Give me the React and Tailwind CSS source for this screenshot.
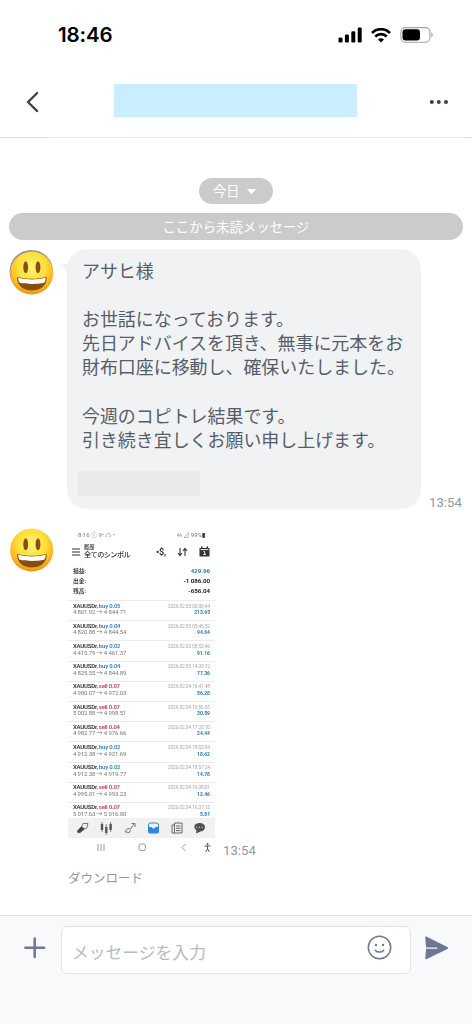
import { useState } from 'react';

const messageLines = [
  'アサヒ様',
  '',
  'お世話になっております。',
  '先日アドバイスを頂き、無事に元本をお',
  '財布口座に移動し、確保いたしました。',
  '',
  '今週のコピトレ結果です。',
  '引き続き宜しくお願い申し上げます。',
];

const trades = [
  { side: 'buy', lot: '0.05', from: '4 801.92', to: '4 844.71', time: '2026.02.05 06:06:44', profit: '213.95' },
  { side: 'buy', lot: '0.04', from: '4 820.88', to: '4 844.54', time: '2026.02.05 05:46:52', profit: '94.64' },
  { side: 'buy', lot: '0.02', from: '4 415.79', to: '4 461.37', time: '2026.02.02 08:52:46', profit: '91.16' },
  { side: 'buy', lot: '0.04', from: '4 825.55', to: '4 844.89', time: '2026.02.05 14:28:12', profit: '77.36' },
  { side: 'sell', lot: '0.07', from: '4 980.07', to: '4 972.03', time: '2026.02.04 16:41:48', profit: '56.28' },
  { side: 'sell', lot: '0.07', from: '5 002.88', to: '4 998.51', time: '2026.02.04 16:56:35', profit: '30.59' },
  { side: 'sell', lot: '0.04', from: '4 982.77', to: '4 976.66', time: '2026.02.04 17:20:10', profit: '24.44' },
  { side: 'buy', lot: '0.02', from: '4 912.38', to: '4 921.69', time: '2026.02.04 18:53:04', profit: '18.62' },
  { side: 'buy', lot: '0.02', from: '4 912.38', to: '4 919.77', time: '2026.02.04 18:57:24', profit: '14.78' },
  { side: 'sell', lot: '0.07', from: '4 995.01', to: '4 993.23', time: '2026.02.04 16:38:01', profit: '12.46' },
  { side: 'sell', lot: '0.07', from: '5 017.63', to: '5 016.80', time: '2026.02.04 16:37:15', profit: '5.81' },
];

const summary = [
  { label: '損益:', value: '429.96', color: 'text-[#2878c0]' },
  { label: '出金:', value: '-1 086.00', color: 'text-[#222]' },
  { label: '残高:', value: '-656.04', color: 'text-[#222]' },
];

function StatusBar() {
  return (
    <div className="flex h-[70px] items-center justify-between pl-[58px] pr-[38px]">
      <span className="font-['Inter'] text-[20.5px] font-semibold leading-6 tracking-[-0.1px] text-black">18:46</span>
      <div className="flex items-center gap-[9px]">
        <svg width="24" height="16" viewBox="0 0 24 16">
          <rect x="0.5" y="10.5" width="4" height="5" rx="1.2" />
          <rect x="6.9" y="7.6" width="4" height="7.9" rx="1.2" />
          <rect x="13.3" y="4.2" width="4" height="11.3" rx="1.2" />
          <rect x="19.7" y="0.6" width="4" height="14.9" rx="1.2" />
        </svg>
        <svg width="20" height="15" viewBox="0 0 20 15" fill="none" stroke="#000">
          <path d="M1 5C6-.1 14-.1 19 5" strokeWidth="2.7" />
          <path d="M4.2 8.5c3.3-3.2 8.3-3.2 11.6 0" strokeWidth="2.6" />
          <path d="M7 11.4c1.7-1.5 4.3-1.5 6 0l-3 3.2z" fill="#000" stroke="none" />
        </svg>
        <svg width="34" height="16" viewBox="0 0 34 16">
          <rect x="0.9" y="0.6" width="29" height="14.6" rx="4.4" fill="none" stroke="#a3a3a3" strokeWidth="1.1" />
          <rect x="2.5" y="2.2" width="17.5" height="11.4" rx="3" />
          <path d="M31.3 5.6c1.9.7 1.9 4 0 4.7z" fill="#a3a3a3" />
        </svg>
      </div>
    </div>
  );
}

function Header() {
  return (
    <header className="flex h-[67px] items-center justify-between pl-[25px] pr-[23px] pb-[7px]">
      <button className="mt-[3px]">
        <svg width="15" height="22" viewBox="0 0 15 22" fill="none" stroke="#3b414b" strokeWidth="2.2" strokeLinecap="round">
          <path d="M12.2 2 3 11.1l9.2 9" />
        </svg>
      </button>
      <div className="ml-[2px] h-[33px] w-[243px] bg-[#c9eeff]" />
      <button className="mt-[3px]">
        <svg width="20" height="6" viewBox="0 0 20 6" fill="#3b414b">
          <circle cx="2.8" cy="3" r="2" />
          <circle cx="9.8" cy="3" r="2" />
          <circle cx="17" cy="3" r="2" />
        </svg>
      </button>
    </header>
  );
}

function Avatar({ id, ring }) {
  return (
    <svg className="shrink-0" width="46" height="46" viewBox="0 0 46 46">
      <defs>
        <radialGradient id={id} cx="0.5" cy="0.36" r="0.65">
          <stop offset="0" stopColor="#fff27a" />
          <stop offset="0.5" stopColor="#ffdf3a" />
          <stop offset="0.8" stopColor="#fdb51f" />
          <stop offset="1" stopColor="#ee8c0c" />
        </radialGradient>
      </defs>
      {ring && <circle cx="22.3" cy="22.7" r="21.8" fill="#8d939c" />}
      <circle cx="22.7" cy="24" r="21.5" fill={`url(#${id})`} />
      <ellipse cx="16.7" cy="18.2" rx="2.4" ry="6" fill="#884f10" />
      <ellipse cx="29" cy="18.2" rx="2.4" ry="6" fill="#884f10" />
      <path d="M8.2 28c9 2.4 20.2 2.4 29.4 0 .8 8.2-5.8 13.5-14.7 13.5S7.4 36.2 8.2 28z" fill="#85500f" />
      <path d="M9.3 28.8c8.6 2.1 18.8 2.1 27.3 0 .2 2-.3 3.5-1.4 4.900-7.600 1.600-17 1.600-24.500 0-1.100-1.400-1.600-2.900-1.400-4.900z" fill="#fff" />
    </svg>
  );
}

function TextMessage() {
  return (
    <div className="flex items-end">
      <div className="flex items-start self-stretch">
        <Avatar id="face-a" ring />
        <svg className="ml-[5px] mt-[15px] shrink-0" width="7" height="12" viewBox="0 0 7 12">
          <path d="M0 0h7v9C5 5 3 2 0 0z" fill="#f1f2f4" />
        </svg>
      </div>
      <div className="h-[260px] w-[354px] shrink-0 rounded-[20px] bg-[#f1f2f4] pl-[15px] pt-[9px] text-[17.95px] leading-[24.1px] text-[#565d68]">
        {messageLines.map((line, i) => (
          <p key={i} className="h-[24.1px] whitespace-nowrap">{line}</p>
        ))}
        <div className="-ml-1 mt-[20px] h-[25px] w-[122px] bg-[#eaeaea]" />
      </div>
      <time className="mb-[-2px] ml-2 font-['Roboto'] text-[13.2px] leading-4 text-[#9199a5]">13:54</time>
    </div>
  );
}

function Trade({ trade }) {
  const sideColor = trade.side === 'buy' ? 'text-[#2f86cc]' : 'text-[#d8404f]';
  return (
    <div className="flex h-[20.2px] shrink-0 justify-between border-t border-[#ececec] px-[5px] pt-[1.6px] leading-[6.6px]">
      <div>
        <p className="text-[6px] font-semibold tracking-[-0.22px] text-[#333]">
          XAUUSDr, <span className={sideColor}>{trade.side} {trade.lot}</span>
        </p>
        <p className="text-[6px] tracking-[-0.13px] text-[#777]">{trade.from} → {trade.to}</p>
      </div>
      <div className="text-right">
        <p className="text-[5px] tracking-[-0.18px] text-[#aaa]">{trade.time}</p>
        <p className="text-[5px] font-bold text-[#2878c0]">{trade.profit}</p>
      </div>
    </div>
  );
}

function TabIcons() {
  return (
    <svg width="147" height="20" viewBox="0 0 147 20" fill="none" stroke="#555" strokeWidth="1">
      <path d="m9.5 13 4-4.5 3 2.5-4.500 3.500-2 .2z" fill="#444" />
      <path d="m14 8 1-2.5h5l-1.200 4.500-2.500 1.200" stroke="#777" />
      <path d="M34 6v6M38.3 9v6M42.6 6v6" strokeWidth="2.4" />
      <path d="M34 4v10M38.3 6v11M42.6 4v10" strokeWidth=".7" />
      <path d="m57 14 2.500-3.500 3 .5L66 6M57.500 14l4 .5 1-2.500M63.500 5.500H67V9" stroke="#777" />
      <path d="M80.500 10V7q0-2 2-2h6q2 0 2 2v3" stroke="#2f86e0" />
      <path d="M80 9h3.500q2 3 4 0H91v4.500q0 2-2 2h-7q-2 0-2-2z" fill="#2f86e0" stroke="none" />
      <path d="M106 7h-2v8h3M106.500 5h7.500v10h-7.500zM108 8h4.500M108 10.300h4.500M108 12.600h4.500" stroke="#666" />
      <path d="M131.500 5c7.500 0 7 8 1 8.500l-4.500 2 .5-3c-4-3-2-7.500 3-7.500z" fill="#505050" stroke="none" />
      <path d="M128 9.300h1.200M130.800 9.300h1.200M133.600 9.300h1.200" stroke="#ddd" />
    </svg>
  );
}

function Attachment() {
  return (
    <div className="flex h-[326px] w-[147px] shrink-0 flex-col bg-white font-['Roboto','Noto_Sans_CJK_JP',sans-serif] blur-[0.4px]">
      <div className="flex h-[12px] shrink-0 items-center justify-between px-[10px] pt-[2px] text-[6px] leading-3 text-[#777]">
        <span>8:16 ⓘ 9• <b className="text-[#333]">☁</b> •</span>
        <span>⅔ ⊿ 99%<b className="text-[#333]">▮</b></span>
      </div>
      <div className="flex h-[23px] shrink-0 items-center pl-[4px] pr-[5px]">
        <svg width="9" height="8" viewBox="0 0 9 8" stroke="#333" strokeWidth="1.1">
          <path d="M0 1h8M0 4h8M0 7h8" />
        </svg>
        <div className="ml-[3px] font-medium text-[#333]">
          <p className="text-[5.2px] leading-[6px]">履歴</p>
          <p className="text-[7.2px] leading-[9px] tracking-[-0.6px]">全てのシンボル</p>
        </div>
        <div className="ml-auto flex items-center gap-[11px]">
          <span className="text-[9px] font-bold leading-3 tracking-[-0.2px] text-[#333]">•$,</span>
          <svg width="11" height="10" viewBox="0 0 11 10" fill="none" stroke="#333" strokeWidth="1.1">
            <path d="M3 1v7M1 6l2 2.5L5 6M8 9V2M6 4l2-2.5L10 4" />
          </svg>
          <svg width="11" height="11" viewBox="0 0 11 11">
            <path d="M.5 2H2V.5h1.5V2h4V.5H9V2h1.5v8.5H.5z" fill="#333" />
            <path d="M1.5 3.6h8M4.5 5.5h1.2v3M4.3 8.5h2.6" fill="none" stroke="#fff" strokeWidth=".9" />
          </svg>
        </div>
      </div>
      <div className="flex h-[37px] shrink-0 flex-col pt-[3px]">
        {summary.map(row => (
          <div key={row.label} className="flex h-[10.2px] items-center justify-between px-[5px] font-bold leading-[10px]">
            <span className="text-[5.8px] text-[#444]">{row.label}</span>
            <span className={`text-[6.2px] tracking-[-0.05px] ${row.color}`}>{row.value}</span>
          </div>
        ))}
      </div>
      <div className="flex h-[218px] shrink-0 flex-col">
        {trades.map((trade, i) => <Trade key={i} trade={trade} />)}
      </div>
      <div className="h-[20px] shrink-0 bg-[#f1f1f1]"><TabIcons /></div>
      <svg width="147" height="16" viewBox="0 1 147 16" fill="none" stroke="#999" strokeWidth="1">
        <path d="M30 7v7M33 7v7M36 7v7" />
        <rect x="71" y="7" width="6.5" height="6.5" rx="2" />
        <path d="m117.5 7-3.500 3.500 3.500 3.500" />
        <path d="M136.500 9h6M139.500 9v3l-2 3M139.500 12l2 3" stroke="#555" />
        <circle cx="139.500" cy="7" r="1" fill="#555" stroke="none" />
      </svg>
    </div>
  );
}

function Composer() {
  const [text, setText] = useState('');

  return (
    <footer className="flex h-[109px] items-start border-t border-[#e2e3e5] bg-[#f8f9fb] pl-[24px] pt-[10px]">
      <button className="mt-[11px]">
        <svg width="22" height="22" viewBox="0 0 22 22" stroke="#6e7794" strokeWidth="2.5" strokeLinecap="round">
          <path d="M10.7 1.5v18.6M1.4 10.8H20" />
        </svg>
      </button>
      <div className="ml-[15px] flex h-[48px] w-[350px] items-center rounded-[6px] border border-[#e2e3e6] bg-white pl-[10px] pr-[18px]">
        <input
          className="mt-[3px] w-[260px] text-[16.8px] leading-6 text-[#565d68] outline-none placeholder:text-[#b4bbc5]"
          placeholder="メッセージを入力"
          value={text}
          onChange={e => setText(e.target.value)}
        />
        <svg className="-mt-[6px] ml-auto" width="25" height="25" viewBox="0 0 25 25" fill="none" stroke="#6e7794" strokeWidth="1.5" strokeLinecap="round">
          <circle cx="12.5" cy="12.5" r="11.2" />
          <path d="M8.3 15.2c1.8 2.5 6.6 2.5 8.4 0" />
          <circle cx="9" cy="10" r="1.2" fill="#6e7794" stroke="none" />
          <circle cx="16" cy="10" r="1.2" fill="#6e7794" stroke="none" />
        </svg>
      </div>
      <button className="ml-[13px] mt-[10px]">
        <svg width="25" height="24" viewBox="0 0 25 24" fill="#6e7794">
          <path d="M1.3 1.5c0-.8.8-1.2 1.5-.8l20.6 10.2c.9.5.9 1.5 0 2L2.8 23.1c-.7.4-1.5 0-1.5-.8l.8-9.5h10.5c1 0 1-1.400 0-1.400H2.100z" />
        </svg>
      </button>
    </footer>
  );
}

export default function App() {
  return (
    <div className="flex h-[1024px] w-[472px] flex-col overflow-hidden bg-white font-['Noto_Sans_CJK_JP',sans-serif]" lang="ja">
      <StatusBar />
      <Header />
      <div className="flex h-px shrink-0 bg-[#ececee]">
        <div className="w-[50px] bg-[#d9e1e2]" />
        <div className="ml-auto w-[7px] bg-[#d9e1e2]" />
      </div>

      <main className="flex flex-1 flex-col pl-[9px] pt-[40px]">
        <button className="ml-[190px] flex h-[26px] w-[74px] items-center rounded-full bg-[#cbcbcb] pl-[14px] text-[13.3px] leading-5 text-white">
          今日
          <svg className="ml-[7px]" width="9" height="5" viewBox="0 0 9 5" fill="#fff">
            <path d="M.6 0h7.8q.6.3.2.8L5.1 4.5q-.6.5-1.2 0L.4.8Q0 .3.600 0z" />
          </svg>
        </button>
        <div className="mt-[9px] flex h-[27px] w-[454px] items-center justify-center rounded-full bg-[#cbcbcb] pb-[2px] text-[13.4px] leading-5 text-white">
          ここから未読メッセージ
        </div>
        <div className="mt-[9px]"><TextMessage /></div>

        <div className="mt-[17px] flex items-start">
          <Avatar id="face-b" />
          <div className="ml-[13px] mt-[2px]">
            <div className="flex items-end">
              <Attachment />
              <time className="mb-[-5px] ml-2 font-['Roboto'] text-[13.2px] leading-4 text-[#9199a5]">13:54</time>
            </div>
            <button className="mt-[14px] block text-[12.5px] leading-5 text-[#8f96a1]">ダウンロード</button>
          </div>
        </div>
      </main>

      <Composer />
    </div>
  );
}
